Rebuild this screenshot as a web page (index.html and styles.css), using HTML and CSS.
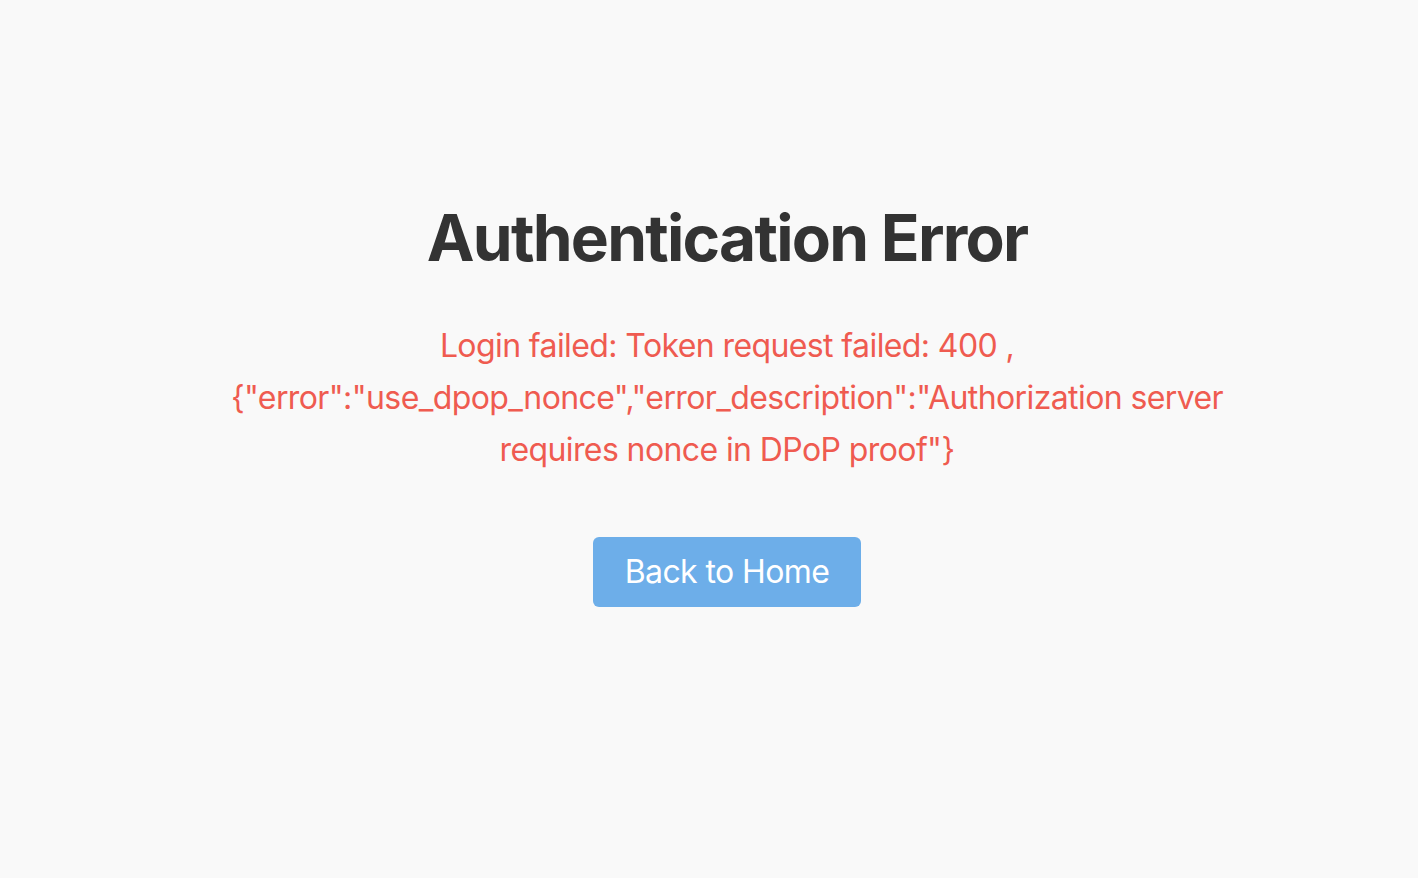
FILE: index.html
```html
<!DOCTYPE html>
<html lang="en">
<head>
<meta charset="utf-8">
<title>Authentication Error</title>
<link rel="stylesheet" href="styles.css">
</head>
<body>
<main class="page">
  <section class="error-card">
    <h1 class="error-title">Authentication Error</h1>
    <p class="error-message">Login failed: Token request failed: 400 , {"error":"use_dpop_nonce","error_description":"Authorization server requires nonce in DPoP proof"}</p>
    <a class="home-button" href="#">Back to Home</a>
  </section>
</main>
</body>
</html>
```
FILE: styles.css
```css
html, body {
  margin: 0;
  padding: 0;
  background: #f9f9f9;
}
body {
  font-family: Inter, "Noto Sans", sans-serif;
  color: #333;
}
.page {
  min-height: 878px;
  display: flex;
  justify-content: center;
  padding-left: 36px;
  box-sizing: border-box;
}
.error-card {
  max-width: 1000px;
  padding-top: 200px;
  display: flex;
  flex-direction: column;
  align-items: center;
  text-align: center;
}
.error-title {
  font-size: 64px;
  font-weight: 700;
  margin: 0;
  line-height: 1.2;
  color: #333;
  letter-spacing: -1.75px;
}
.error-message {
  font-size: 32px;
  line-height: 52px;
  color: #ef5b50;
  margin: 43px 0 0;
  letter-spacing: -0.6px;
}
.home-button {
  margin-top: 61px;
  display: inline-block;
  background: #6daee9;
  color: #fff;
  font-size: 32px;
  line-height: 1.2;
  padding: 16px 32px;
  border-radius: 6px;
  text-decoration: none;
  letter-spacing: -0.6px;
}
```
